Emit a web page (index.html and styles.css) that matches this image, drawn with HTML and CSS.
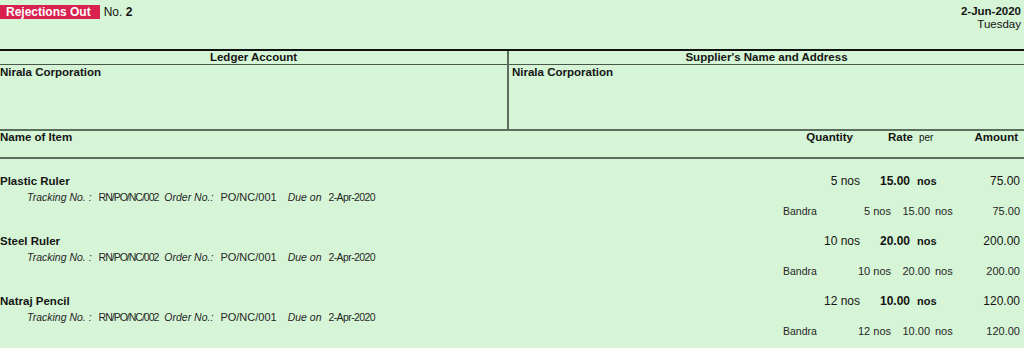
FILE: index.html
```html
<!DOCTYPE html>
<html lang="en">

<head>
    <meta charset="UTF-8">
    <meta name="viewport" content="width=device-width, initial-scale=1.0">
    <title>Rejections Out No. 2</title>
    <link rel="stylesheet" href="styles.css">
</head>

<body>
    <!-- Voucher header -->
    <div class="voucher-head">
        <div class="voucher-type">
            <span class="badge">Rejections Out</span>
            <span class="voucher-no">No. <b>2</b></span>
        </div>
        <div class="voucher-date">
            <div class="date">2-Jun-2020</div>
            <div class="day">Tuesday</div>
        </div>
    </div>

    <!-- Party details -->
    <div class="party">
        <div class="party-col ledger">
            <div class="party-title">Ledger Account</div>
            <div class="party-body">Nirala Corporation</div>
        </div>
        <div class="party-col supplier">
            <div class="party-title">Supplier's Name and Address</div>
            <div class="party-body">Nirala Corporation</div>
        </div>
    </div>

    <!-- Column headings -->
    <div class="col-heads">
        <div class="c-name">Name of Item</div>
        <div class="c-qty">Quantity</div>
        <div class="c-rate">Rate</div>
        <div class="c-per">per</div>
        <div class="c-amount">Amount</div>
    </div>

    <!-- Inventory entries -->
    <div class="items">
        <div class="item">
            <div class="item-row">
                <div class="item-name">Plastic Ruler</div>
                <div class="qty">5 nos</div>
                <div class="rate">15.00</div>
                <div class="per">nos</div>
                <div class="amount">75.00</div>
            </div>
            <div class="tracking">
                <i>Tracking No. :</i><span class="track-no">RN/PO/NC/002</span>
                <i>Order No.:</i><span>PO/NC/001</span>
                <i class="due">Due on</i><span class="due-date">2-Apr-2020</span>
            </div>
            <div class="batch-row">
                <div></div>
                <div class="godown">Bandra</div>
                <div class="qty">5 nos</div>
                <div class="rate">15.00</div>
                <div class="per">nos</div>
                <div class="amount">75.00</div>
            </div>
        </div>

        <div class="item">
            <div class="item-row">
                <div class="item-name">Steel Ruler</div>
                <div class="qty">10 nos</div>
                <div class="rate">20.00</div>
                <div class="per">nos</div>
                <div class="amount">200.00</div>
            </div>
            <div class="tracking">
                <i>Tracking No. :</i><span class="track-no">RN/PO/NC/002</span>
                <i>Order No.:</i><span>PO/NC/001</span>
                <i class="due">Due on</i><span class="due-date">2-Apr-2020</span>
            </div>
            <div class="batch-row">
                <div></div>
                <div class="godown">Bandra</div>
                <div class="qty">10 nos</div>
                <div class="rate">20.00</div>
                <div class="per">nos</div>
                <div class="amount">200.00</div>
            </div>
        </div>

        <div class="item">
            <div class="item-row">
                <div class="item-name">Natraj Pencil</div>
                <div class="qty">12 nos</div>
                <div class="rate">10.00</div>
                <div class="per">nos</div>
                <div class="amount">120.00</div>
            </div>
            <div class="tracking">
                <i>Tracking No. :</i><span class="track-no">RN/PO/NC/002</span>
                <i>Order No.:</i><span>PO/NC/001</span>
                <i class="due">Due on</i><span class="due-date">2-Apr-2020</span>
            </div>
            <div class="batch-row">
                <div></div>
                <div class="godown">Bandra</div>
                <div class="qty">12 nos</div>
                <div class="rate">10.00</div>
                <div class="per">nos</div>
                <div class="amount">120.00</div>
            </div>
        </div>
    </div>
</body>

</html>
```

FILE: styles.css
```css
body {
    margin: 0;
    background-color: #d6f5d6;
    font-family: "Liberation Sans", Arial, sans-serif;
    font-size: 11px;
    color: #141414;
}

/* header */
.voucher-head {
    display: flex;
    justify-content: space-between;
    height: 49px;
    padding-right: 3px;
}

.voucher-type {
    display: flex;
    align-items: flex-start;
    padding-top: 5px;
}

.badge {
    background-color: #d9204f;
    color: white;
    font-size: 12px;
    font-weight: bold;
    line-height: 14px;
    padding: 0 9px 0 6px;
}

.voucher-no {
    font-size: 12px;
    line-height: 14px;
    margin-left: 4px;
}

.voucher-date {
    text-align: right;
    font-size: 11.5px;
    padding-top: 5px;
    line-height: 13px;
}

.date {
    font-weight: bold;
}

/* party */
.party {
    display: grid;
    grid-template-columns: 509px 1fr;
    border-top: 2px solid #111;
    border-bottom: 2px solid #5d6d5d;
}

.ledger {
    border-right: 2px solid #5d6d5d;
}

.party-title {
    text-align: center;
    font-weight: bold;
    font-size: 11.5px;
    line-height: 13px;
    border-bottom: 1px solid #485848;
}

.party-body {
    height: 64px;
    font-weight: bold;
    font-size: 11.5px;
    line-height: 14px;
}

.supplier .party-body {
    padding-left: 3px;
}

/* column headings */
.col-heads {
    display: grid;
    grid-template-columns: 1fr 70px 60px 37px 68px;
    height: 26px;
    padding-right: 6px;
    border-bottom: 2px solid #5d6d5d;
    font-weight: bold;
    font-size: 11.5px;
    line-height: 13px;
}

.c-qty,
.c-rate,
.c-amount {
    text-align: right;
}

.c-per {
    font-weight: normal;
    font-size: 10px;
    padding-left: 6px;
}

/* items */
.items {
    padding-top: 14px;
    padding-right: 4px;
}

.item {
    margin-bottom: 16px;
}

.item-row {
    display: grid;
    grid-template-columns: 1fr 70px 50px 40px 70px;
    line-height: 17px;
    font-size: 12px;
}

.item-name {
    font-weight: bold;
    font-size: 11.5px;
}

.item-row .qty,
.item-row .rate,
.item-row .amount,
.batch-row .qty,
.batch-row .rate,
.batch-row .amount {
    text-align: right;
}

.item-row .rate,
.item-row .per {
    font-weight: bold;
}

.item-row .per {
    padding-left: 7px;
    font-size: 11px;
}

.tracking {
    display: flex;
    gap: 6px;
    padding-left: 27px;
    line-height: 15px;
    color: #262626;
}

.tracking i {
    font-size: 10.5px;
    margin-right: 1px;
}

.tracking .due {
    margin-left: 5px;
}

/* tracking and due date print in a condensed face */
.track-no {
    font-size: 10.5px;
    letter-spacing: -1px;
}

.due-date {
    font-size: 10.5px;
    letter-spacing: -0.6px;
}

.batch-row {
    display: grid;
    grid-template-columns: 783px 67px 41px 39px 40px 1fr;
    line-height: 12px;
    color: #262626;
}

.godown {
    font-size: 10.5px;
}

.batch-row .per {
    padding-left: 5px;
}
```
